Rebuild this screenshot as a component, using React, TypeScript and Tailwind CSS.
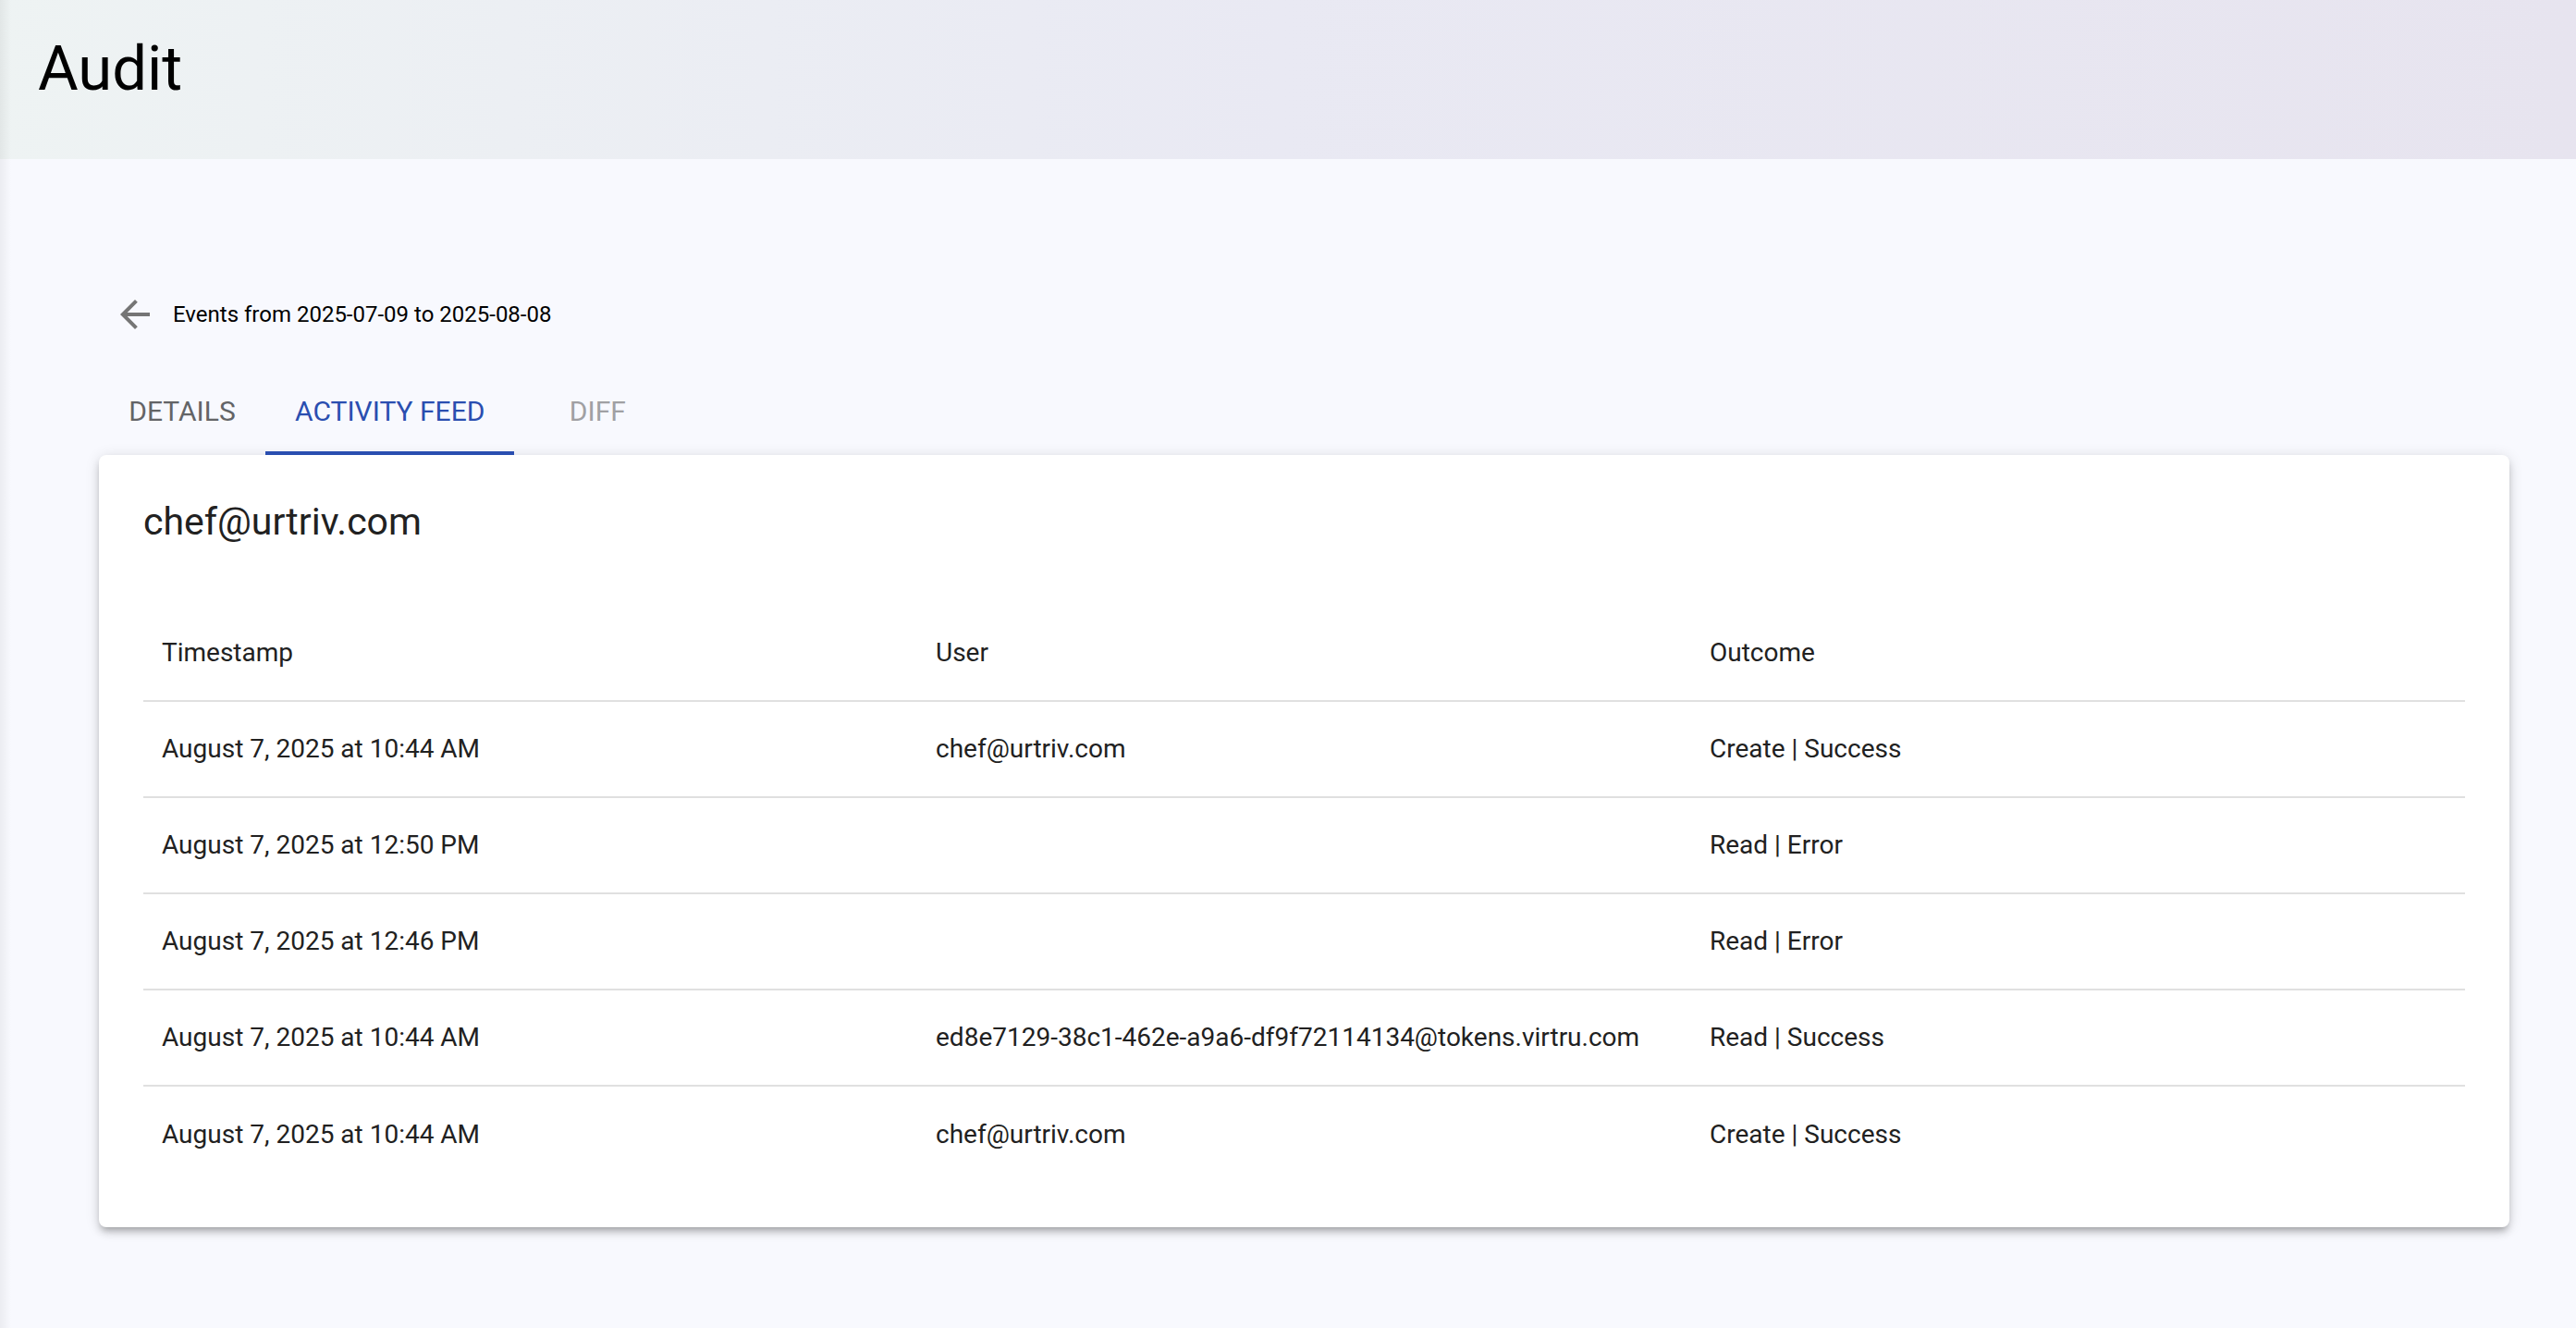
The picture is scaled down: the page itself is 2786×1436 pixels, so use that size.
import React from "react";

const rows: [string, string, string][] = [
  ["August 7, 2025 at 10:44 AM", "chef@urtriv.com", "Create | Success"],
  ["August 7, 2025 at 12:50 PM", "", "Read | Error"],
  ["August 7, 2025 at 12:46 PM", "", "Read | Error"],
  [
    "August 7, 2025 at 10:44 AM",
    "ed8e7129-38c1-462e-a9a6-df9f72114134@tokens.virtru.com",
    "Read | Success",
  ],
  ["August 7, 2025 at 10:44 AM", "chef@urtriv.com", "Create | Success"],
];

export default function App() {
  return (
    <div className="relative min-h-[1436px] bg-[#f8f9fe] font-['Roboto',sans-serif] text-[#212121]">
      <div className="pointer-events-none absolute inset-y-0 left-0 w-[12px] bg-gradient-to-r from-[rgba(0,0,0,0.05)] to-transparent" />
      <header className="h-[172px] bg-gradient-to-r from-[#eef3f3] via-[#e9e9f3] to-[#e7e4ef] pl-[41px] pt-[40px]">
        <h1 className="text-[67px] font-normal leading-[68px] text-black">Audit</h1>
      </header>
      <main className="pl-[107px] pr-[72px] pt-[144px]">
        <div className="flex h-[48px] items-center">
          <button className="ml-[15px] flex h-[48px] w-[48px] items-center justify-center text-[#757575]">
            <svg viewBox="0 0 24 24" className="h-[48px] w-[48px]" fill="currentColor">
              <path d="M20 11H7.83l5.59-5.59L12 4l-8 8 8 8 1.41-1.41L7.83 13H20v-2z" />
            </svg>
          </button>
          <span className="ml-[17px] text-[24px] text-black">Events from 2025-07-09 to 2025-08-08</span>
        </div>
        <div className="mt-[32px] flex h-[96px]">
          <div className="relative flex h-[96px] min-w-[180px] items-center justify-center px-[32px] text-[30px] font-normal uppercase text-[#636466]">
            Details
          </div>
          <div className="relative flex h-[96px] min-w-[180px] items-center justify-center px-[32px] text-[30px] font-normal uppercase text-[#2a4eb0]">
            Activity Feed
            <div className="absolute inset-x-0 bottom-0 h-[4px] bg-[#2a4eb0]" />
          </div>
          <div className="relative flex h-[96px] min-w-[180px] items-center justify-center px-[32px] text-[30px] font-normal uppercase text-[#a0a0a3]">
            Diff
          </div>
        </div>
        <section className="rounded-[8px] bg-white p-[48px] shadow-[0_6px_6px_-4px_rgba(0,0,0,0.2),0_6px_8px_0_rgba(0,0,0,0.14),0_2px_16px_0_rgba(0,0,0,0.12)]">
          <h2 className="text-[41px] font-normal leading-[48px] text-[#212121]">chef@urtriv.com</h2>
          <div className="mt-[67px]">
            <div className="grid h-[104px] grid-cols-3 items-center border-b-2 border-[#e0e0e0] text-[28px] font-normal">
              <div className="pl-[20px]">Timestamp</div>
              <div className="pl-[20px]">User</div>
              <div className="pl-[20px]">Outcome</div>
            </div>
            {rows.map((r, i) => (
              <div
                key={i}
                className={
                  i < rows.length - 1
                    ? "grid h-[104px] grid-cols-3 items-center border-b-2 border-[#e0e0e0] text-[28px]"
                    : "grid h-[104px] grid-cols-3 items-center text-[28px]"
                }
              >
                <div className="pl-[20px]">{r[0]}</div>
                <div className="whitespace-nowrap pl-[20px]">{r[1]}</div>
                <div className="pl-[20px]">{r[2]}</div>
              </div>
            ))}
          </div>
        </section>
      </main>
    </div>
  );
}
